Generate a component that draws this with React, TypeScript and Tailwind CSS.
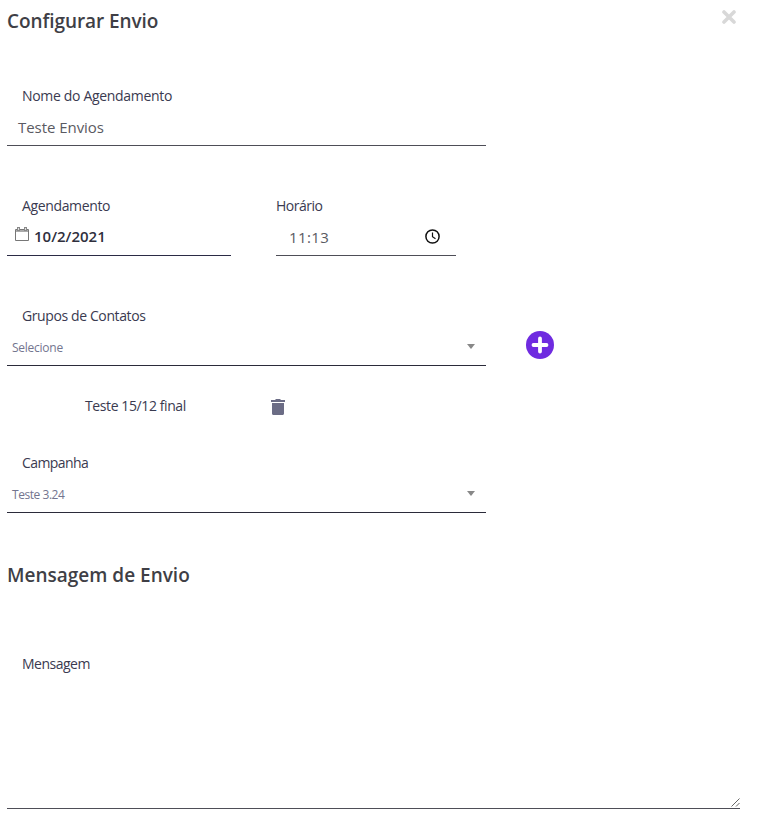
import React from "react";

function Label({ children, className = "" }: { children: React.ReactNode; className?: string }) {
  return (
    <label className={`block h-5 whitespace-nowrap text-[14px] leading-5 text-[#3a3a50] ${className}`}>
      <span>{children}</span>
    </label>
  );
}

function Caret() {
  return (
    <svg width="8" height="5" viewBox="0 0 8 5" className="mt-[2px] mr-[11px]">
      <path d="M0 0h8L4 5z" fill="#888888" />
    </svg>
  );
}

function SelectRow({ value, className }: { value: string; className: string }) {
  return (
    <div className="flex h-[40px] w-[479px] items-center justify-between border-b border-[#2b2b3a] pl-[5px]">
      <span className={`mt-[4px] whitespace-nowrap text-[12px] leading-4 text-[#73758f] ${className}`}>{value}</span>
      <Caret />
    </div>
  );
}

export default function App() {
  return (
    <main className="h-[816px] w-[768px] overflow-hidden bg-white pl-[7px] font-['Open_Sans','Noto_Sans',sans-serif]">
      <header className="flex h-[86px] justify-between pr-[32px]">
        <h1 className="mt-[7px] h-7 whitespace-nowrap text-[19px] leading-7 font-semibold tracking-[-0.08px] text-[#3f3f46]">Configurar Envio</h1>
        <svg width="14" height="14" viewBox="0 0 14 14" className="mt-[10px]" stroke="#d8d8d8" strokeWidth="3.6" strokeLinecap="round">
          <path d="M2 2l10 10M12 2L2 12" />
        </svg>
      </header>

      <section className="h-[110px]">
        <Label className="pl-[15px] tracking-[-0.32px]">Nome do Agendamento</Label>
        <div className="h-[40px] w-[479px] border-b border-[#4e4e57] pt-[9px] pl-[11px]">
          <span className="block text-[15px] leading-6 tracking-[-0.05px] text-[#5a5a62]">Teste Envios</span>
        </div>
      </section>

      <section className="flex h-[110px] gap-[45px]">
        <div className="w-[224px]">
          <Label className="pl-[15px] tracking-[-0.36px]">Agendamento</Label>
          <div className="flex h-[40px] border-b border-[#2b2b45] pl-[8px]">
            <svg width="14" height="14" viewBox="0 0 14 14" className="mt-[11px]" fill="none">
              <path d="M.5 2.500h13v11H.5z" stroke="#777" />
              <path d="M1 3h12v2H1z" fill="#aaa" />
              <path d="M2 0h3v4H2zM9 0h3v4H9z" fill="#888" />
              <path d="M3 1h1v2H3zM10 1h1v2h-1z" fill="#ddd" />
            </svg>
            <span className="mt-[8px] ml-[5px] text-[15px] leading-6 font-semibold text-[#2f2f3d]">10/2/2021</span>
          </div>
        </div>
        <div className="w-[180px]">
          <Label className="tracking-[-0.5px]">Horário</Label>
          <div className="flex h-[40px] justify-between border-b border-[#4e4e57] pr-[16px] pl-[13px]">
            <span className="mt-[9px] text-[15px] leading-6 tracking-[0.4px] text-[#5a5a62]">11:13</span>
            <svg width="15" height="15" viewBox="0 0 15 15" className="mt-[13px]" fill="none" stroke="#111">
              <circle cx="7.5" cy="7.5" r="6.6" strokeWidth="1.5" />
              <path d="M7.5 3.500v4.200l3 2" strokeWidth="1.2" />
            </svg>
          </div>
        </div>
      </section>

      <section className="flex h-[90px]">
        <div>
          <Label className="pl-[15px] tracking-[-0.39px]">Grupos de Contatos</Label>
          <SelectRow value="Selecione" className="tracking-[-0.25px]" />
        </div>
        <svg width="28" height="28" viewBox="0 0 28 28" className="mt-[25px] ml-[40px]">
          <circle cx="14" cy="14" r="14" fill="#6f2be0" />
          <path d="M14 7.500v13M7.500 14h13" stroke="#fff" strokeWidth="3.8" strokeLinecap="round" />
        </svg>
      </section>

      <section className="flex h-[57px] pl-[78px]">
        <span className="block w-[186px] text-[14px] leading-5 tracking-[-0.4px] text-[#3a3a50]">Teste 15/12 final</span>
        <svg width="14" height="16" viewBox="0 0 14 16" className="mt-[3px]" fill="#6b6c85">
          <path d="M0 1h4l1-1h4l1 1h4v2H0zM1 4h12v10.500c0 .9-.6 1.500-1.500 1.500h-9C1.600 16 1 15.400 1 14.500z" />
        </svg>
      </section>

      <section className="h-[108px]">
        <Label className="pl-[15px] tracking-[-0.6px]">Campanha</Label>
        <SelectRow value="Teste 3.24" className="tracking-[-0.45px]" />
      </section>

      <section>
        <h2 className="h-[93px] text-[19px] leading-7 font-semibold text-[#3f3f46]">Mensagem de Envio</h2>
        <div className="flex h-[155px] w-[733px] items-start justify-between border-b border-[#4e4e57]">
          <Label className="pl-[15px] tracking-[-0.5px]">Mensagem</Label>
          <svg width="9" height="9" viewBox="0 0 9 9" className="mb-[1px] self-end" stroke="#666" strokeWidth="1">
            <path d="M.5 8.500l8-8M5 8.500l3.500-3.500" />
          </svg>
        </div>
      </section>
    </main>
  );
}
